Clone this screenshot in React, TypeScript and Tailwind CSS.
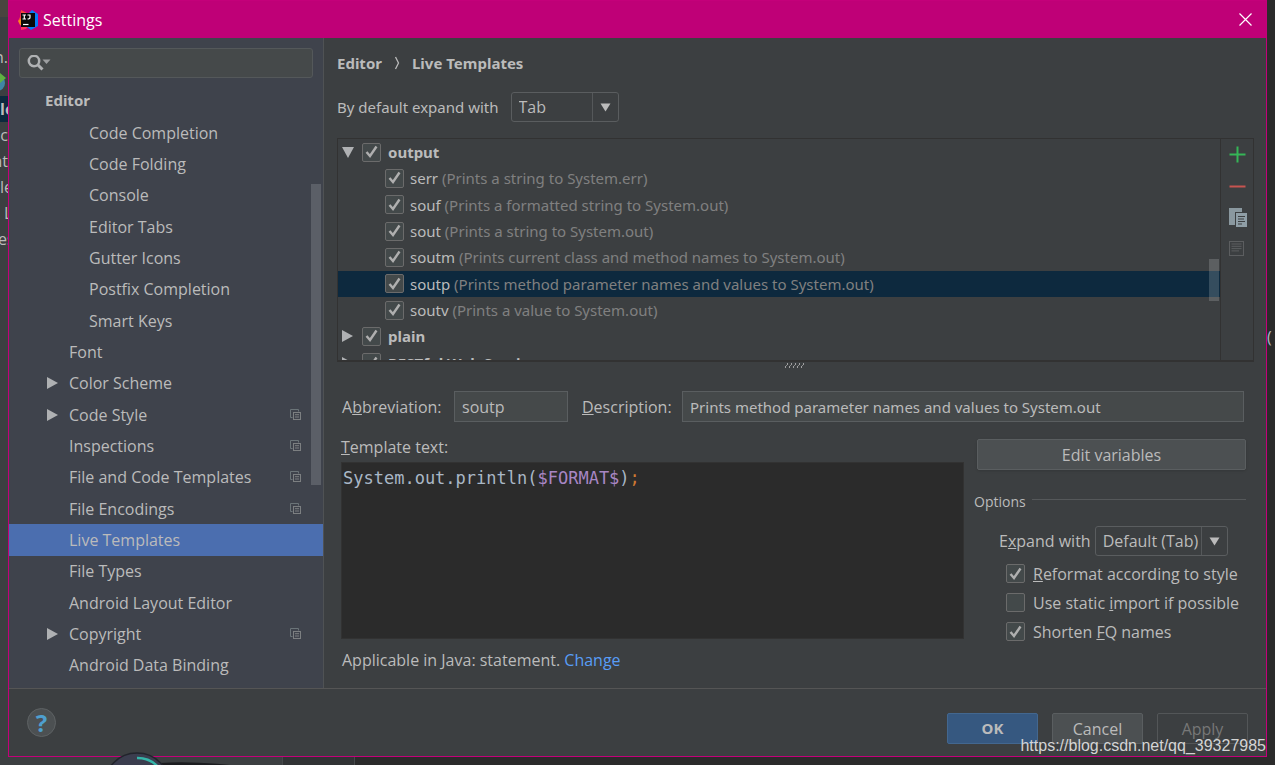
import React from "react";

type SideItem = { label: string; indent?: boolean; arrow?: boolean; copy?: boolean; selected?: boolean };

const SIDE_ITEMS: SideItem[] = [
  { label: "Code Completion", indent: true },
  { label: "Code Folding", indent: true },
  { label: "Console", indent: true },
  { label: "Editor Tabs", indent: true },
  { label: "Gutter Icons", indent: true },
  { label: "Postfix Completion", indent: true },
  { label: "Smart Keys", indent: true },
  { label: "Font" },
  { label: "Color Scheme", arrow: true },
  { label: "Code Style", arrow: true, copy: true },
  { label: "Inspections", copy: true },
  { label: "File and Code Templates", copy: true },
  { label: "File Encodings", copy: true },
  { label: "Live Templates", selected: true },
  { label: "File Types" },
  { label: "Android Layout Editor" },
  { label: "Copyright", arrow: true, copy: true },
  { label: "Android Data Binding" },
];

type TreeItem = { name: string; desc?: string; group?: "open" | "closed"; selected?: boolean };

const TREE: TreeItem[] = [
  { name: "output", group: "open" },
  { name: "serr", desc: "(Prints a string to System.err)" },
  { name: "souf", desc: "(Prints a formatted string to System.out)" },
  { name: "sout", desc: "(Prints a string to System.out)" },
  { name: "soutm", desc: "(Prints current class and method names to System.out)" },
  { name: "soutp", desc: "(Prints method parameter names and values to System.out)", selected: true },
  { name: "soutv", desc: "(Prints a value to System.out)" },
  { name: "plain", group: "closed" },
  { name: "RESTful Web Services", group: "closed" },
];

function ArrowRight() {
  return (
    <svg width="11" height="12" viewBox="0 0 11 12" className="shrink-0" aria-hidden="true">
      <path d="M0 0L11 6L0 12Z" fill="#afb1b3" />
    </svg>
  );
}

function ArrowDown() {
  return (
    <svg width="11" height="9" viewBox="0 0 11 9" className="shrink-0" aria-hidden="true">
      <path d="M.5 .5H10.500L5.500 8.500Z" fill="#bbbbbb" />
    </svg>
  );
}

function ProjectCopyIcon() {
  return (
    <svg width="12" height="12" viewBox="0 0 12 12" fill="none" aria-hidden="true">
      <path d="M2.500 8.500H.5V.5H8.500V2.500" stroke="#6b7478" />
      <rect x="3.500" y="3.500" width="7" height="7" stroke="#7c7f81" />
      <path d="M5 5.700H9M5 8H9" stroke="#7c7f81" />
    </svg>
  );
}

function Check({ id, defaultChecked = false }: { id: string; defaultChecked?: boolean }) {
  return (
    <span className="grid shrink-0 place-items-center">
      <input
        id={id}
        type="checkbox"
        defaultChecked={defaultChecked}
        className="peer col-start-1 row-start-1 size-[19px] appearance-none rounded-xs border border-[#6b6b6b] bg-[#43494a]"
      />
      <svg
        width="13"
        height="14"
        viewBox="0 0 13 14"
        fill="none"
        className="pointer-events-none invisible col-start-1 row-start-1 peer-checked:visible"
        aria-hidden="true"
      >
        <path d="M1.500 7L5 11L11.500 1.500" stroke="#afafaf" strokeWidth="2.400" />
      </svg>
    </span>
  );
}

function Combo({ id, value, className }: { id: string; value: string; className: string }) {
  return (
    <span className={`grid h-[30px] ${className}`}>
      <select
        id={id}
        defaultValue={value}
        className="col-start-1 row-start-1 appearance-none rounded-[3px] border border-[#5a5d5f] bg-[#3c3f41] pl-[7px] text-[#bbbbbb]"
      >
        <option>{value}</option>
      </select>
      <span className="pointer-events-none col-start-1 row-start-1 my-px flex w-[27px] items-center justify-center justify-self-end border-l border-[#55585a]">
        <ArrowDown />
      </span>
    </span>
  );
}

function Sidebar() {
  return (
    <aside className="flex w-[315px] shrink-0 flex-col border-r border-[#4f5254] bg-[#3f434c] pt-2.5">
      <label className="mx-2.5 flex h-[30px] shrink-0 items-center rounded-[3px] border border-[#54585a] bg-[#45494a] pl-[7px]">
        <svg width="24" height="17" viewBox="0 0 24 17" fill="none" aria-hidden="true">
          <circle cx="7" cy="6" r="5.200" stroke="#afb1b3" strokeWidth="2.500" />
          <path d="M10.500 9.500L15.500 14.500" stroke="#afb1b3" strokeWidth="3" />
          <path d="M15.500 4.500H23.500L19.500 9Z" fill="#9c9ea0" />
        </svg>
        <input type="text" aria-label="Search settings" className="min-w-0 flex-1 bg-transparent px-1 outline-none" />
      </label>
      <h2 className="mt-[9px] mb-[3px] pl-9 font-['Noto_Sans',sans-serif] text-[15px] font-bold leading-[27px]">
        Editor
      </h2>
      <ul className="flex min-h-0 flex-1 flex-col pb-[7px]">
        {SIDE_ITEMS.map((item) => (
          <li key={item.label} className={`flex min-h-0 flex-1 ${item.selected ? "bg-[#4b6eaf]" : ""}`}>
            <button type="button" className="flex flex-1 items-center text-left">
              <span className={`flex shrink-0 items-center ${item.indent ? "w-20" : "w-[60px]"} pl-[38px]`}>
                {item.arrow && <ArrowRight />}
              </span>
              <span className="flex-1">{item.label}</span>
              {item.copy && (
                <span className="pr-[21px]">
                  <ProjectCopyIcon />
                </span>
              )}
            </button>
          </li>
        ))}
      </ul>
    </aside>
  );
}

function TemplateTree() {
  return (
    <div className="relative h-[221px] min-w-0 flex-1 overflow-hidden font-['Noto_Sans',sans-serif] text-[15px]">
      <ul className="grid h-[237px] auto-rows-fr">
        {TREE.map((t) => (
          <li key={t.name} className={`flex items-center ${t.selected ? "bg-[#0d293e]" : ""}`}>
            <span className={`flex shrink-0 items-center pl-1 ${t.group ? "w-6" : "w-[47px]"}`}>
              {t.group === "open" && (
                <svg width="12" height="11" viewBox="0 0 12 11" aria-hidden="true">
                  <path d="M0 0H12L6 11Z" fill="#afb1b3" />
                </svg>
              )}
              {t.group === "closed" && <ArrowRight />}
            </span>
            <Check id={`tpl-${t.name}`} defaultChecked />
            <label htmlFor={`tpl-${t.name}`} className={t.group ? "pl-[7px] font-bold" : "pl-1.5"}>
              {t.name}
              {t.desc && <span className="text-[#808080]"> {t.desc}</span>}
            </label>
          </li>
        ))}
      </ul>
      <div className="absolute top-[120px] right-px h-[42px] w-2.5 bg-white/17" />
    </div>
  );
}

function TreeToolbar() {
  return (
    <div className="flex w-[33px] flex-col border-l border-[#323232]">
      <button type="button" aria-label="Add" className="grid h-[31px] place-items-center">
        <svg width="17" height="17" viewBox="0 0 17 17" aria-hidden="true">
          <path d="M8.500 .5V16.500M.5 8.500H16.500" stroke="#35b657" strokeWidth="2" />
        </svg>
      </button>
      <button type="button" aria-label="Remove" className="grid h-8 place-items-center">
        <svg width="17" height="17" viewBox="0 0 17 17" aria-hidden="true">
          <path d="M.5 8.500H16.500" stroke="#c75450" strokeWidth="2" />
        </svg>
      </button>
      <button type="button" aria-label="Duplicate" className="grid h-[31px] place-items-center">
        <svg width="17" height="19" viewBox="0 0 17 19" className="overflow-visible" aria-hidden="true">
          <path d="M0 0H13V4H6V17H0Z" fill="#8a989f" />
          <path d="M7 5H18V19H7Z" fill="#8f9ea6" />
          <path d="M9 8.500H16M9 11H15M9 13.500H16M9 16H13" stroke="#3c3f41" />
        </svg>
      </button>
      <button type="button" aria-label="Restore defaults" disabled className="grid h-[31px] place-items-center">
        <svg width="17" height="15" viewBox="0 0 17 15" fill="none" aria-hidden="true">
          <rect x=".5" y=".5" width="14" height="14" stroke="#5c5e60" />
          <path d="M2.500 3H12.500M2.500 5.300H12.500M2.500 7.600H12.500M2.500 9.900H10" stroke="#5c5e60" />
        </svg>
      </button>
    </div>
  );
}

function OptionsPanel() {
  return (
    <div className="flex w-[272px] shrink-0 flex-col">
      <button
        type="button"
        className="mt-[5px] ml-[3px] h-[31px] rounded-xs border border-[#5a5e60] bg-[#4c5052] shadow-sm"
      >
        Edit variables
      </button>
      <fieldset className="mt-5 flex flex-col">
        <div className="flex items-center gap-1.5">
          <span className="text-[14px] leading-6">Options</span>
          <span className="mb-1.5 h-px flex-1 bg-[#55585a]" />
        </div>
        <div className="mt-3 flex items-center gap-1 pl-[25px]">
          <label htmlFor="expand">
            E<u>x</u>pand with
          </label>
          <Combo id="expand" value="Default (Tab)" className="w-[133px]" />
        </div>
        <div className="mt-[3px] flex flex-col pl-8">
          <div className="flex h-[29px] items-center gap-2">
            <Check id="reformat" defaultChecked />
            <label htmlFor="reformat">
              <u>R</u>eformat according to style
            </label>
          </div>
          <div className="flex h-[29px] items-center gap-2">
            <Check id="static-import" />
            <label htmlFor="static-import">
              Use static <u>i</u>mport if possible
            </label>
          </div>
          <div className="flex h-[29px] items-center gap-2">
            <Check id="shorten" defaultChecked />
            <label htmlFor="shorten">
              Shorten <u>F</u>Q names
            </label>
          </div>
        </div>
      </fieldset>
    </div>
  );
}

function MainPanel() {
  return (
    <main className="flex min-w-0 flex-1 flex-col pr-3 pl-[13px]">
      <nav className="mt-3 flex h-[26px] items-center font-['Noto_Sans',sans-serif] text-[15px] font-bold">
        <span>Editor</span>
        <svg width="6" height="14" viewBox="0 0 6 14" fill="none" className="mx-3" aria-hidden="true">
          <path d="M1.500 1L4.500 7L1.500 13" stroke="#bbbbbb" strokeWidth="1.300" />
        </svg>
        <span>Live Templates</span>
      </nav>
      <div className="mt-4 flex items-center gap-3">
        <label htmlFor="default-expand" className="font-['Noto_Sans',sans-serif] text-[15px]">
          By default expand with
        </label>
        <Combo id="default-expand" value="Tab" className="w-[108px]" />
      </div>
      <section className="mt-4 flex border border-b-2 border-[#323232]">
        <TemplateTree />
        <TreeToolbar />
      </section>
      <div className="flex h-[29px] justify-center">
        <svg width="22" height="8" viewBox="0 0 22 8" aria-hidden="true">
          <path
            d="M2 2h1M6 2h1M10 2h1M14 2h1M18 2h1M0 5h1M4 5h1M8 5h1M12 5h1M16 5h1"
            stroke="#c0c0c0"
            strokeWidth="1.500"
          />
          <path d="M1 3.500h1M5 3.500h1M9 3.500h1M13 3.500h1M17 3.500h1" stroke="#8a8a8a" />
        </svg>
      </div>
      <div className="flex items-center pr-2.5 pl-[5px]">
        <label htmlFor="abbr" className="w-28">
          A<u>b</u>breviation:
        </label>
        <input
          id="abbr"
          type="text"
          defaultValue="soutp"
          className="h-[31px] w-[114px] border border-[#5a5e60] bg-[#45494a] px-[7px] outline-none"
        />
        <label htmlFor="desc" className="w-[114px] pl-3.5">
          <u>D</u>escription:
        </label>
        <input
          id="desc"
          type="text"
          defaultValue="Prints method parameter names and values to System.out"
          className="h-[31px] min-w-0 flex-1 border border-[#5a5e60] bg-[#45494a] px-[7px] font-['Noto_Sans',sans-serif] text-[15px] outline-none"
        />
      </div>
      <div className="mt-3 flex gap-2.5 pr-2 pl-1">
        <div className="flex min-w-0 flex-1 flex-col">
          <label htmlFor="template" className="pb-px leading-[27px]">
            <u>T</u>emplate text:
          </label>
          <div
            id="template"
            role="textbox"
            aria-label="Template text"
            contentEditable
            suppressContentEditableWarning
            className="h-[177px] border border-[#323232] bg-[#2b2b2b] px-px pt-[3px] font-['DejaVu_Sans_Mono',monospace] text-[17px] leading-6 text-[#a9b7c6] outline-none"
          >
            System.out.println(<span className="text-[#a886c4]">$FORMAT$</span>)<span className="text-[#cc7832]">;</span>
          </div>
        </div>
        <OptionsPanel />
      </div>
      <p className="mt-px pl-[5px] leading-[26px]">
        Applicable in Java: statement.{" "}
        <a href="#change" className="text-[#589df6]">
          Change
        </a>
      </p>
    </main>
  );
}

function Logo() {
  return (
    <svg width="20" height="20" viewBox="0 0 20 20" aria-hidden="true">
      <path d="M3 0L9 3L7 10L0 11L2 7Z" fill="#f9443f" />
      <path d="M0 11L4 8V16L2 15Z" fill="#fc8a1c" />
      <path d="M3 15H11L8 19L3 20Z" fill="#fe315d" />
      <path d="M11 3L14 0L20 4V16L13 20L9 17Z" fill="#087cfa" />
      <rect x="3" y="3" width="14" height="14" fill="#090909" />
      <path
        d="M4.500 5H8M6.300 5V9M4.500 9H8M9.500 5H12.500M12 5V7.500Q12 9 9.500 9"
        stroke="#fff"
        strokeWidth="1.200"
        fill="none"
      />
      <path d="M5 14.500H10.500" stroke="#fff" strokeWidth="1.200" />
    </svg>
  );
}

function Dialog() {
  return (
    <div className="flex min-w-0 flex-1 flex-col border border-[#c4007a] bg-[#3c3f41]">
      <header className="flex h-[37px] shrink-0 items-center bg-[#bf0077] pr-3.5 pl-[9px] text-white">
        <Logo />
        <h1 className="flex-1 pl-[5px]">Settings</h1>
        <button type="button" aria-label="Close">
          <svg width="13" height="13" viewBox="0 0 13 13" aria-hidden="true">
            <path d="M.5 .5L12.500 12.500M12.500 .5L.5 12.500" stroke="#fff" strokeWidth="1.200" />
          </svg>
        </button>
      </header>
      <div className="flex min-h-0 flex-1">
        <div className="relative flex">
          <Sidebar />
          <div className="absolute top-[146px] right-[3px] h-[301px] w-2.5 bg-[#5b5f67]" />
        </div>
        <MainPanel />
      </div>
      <footer className="flex h-[68px] shrink-0 items-center border-t border-[#555555] pr-[18px] pl-[18px]">
        <button
          type="button"
          aria-label="Help"
          className="flex size-[29px] items-center justify-center rounded-full border border-[#5e6264] bg-[#4c5052] text-[24px] font-bold text-[#4e9fcf]"
        >
          ?
        </button>
        <div className="mt-3 ml-auto flex gap-3.5">
          <button
            type="button"
            className="h-[31px] w-[91px] rounded-xs border border-[#43678f] bg-[#365880] font-['Noto_Sans',sans-serif] text-[15px] font-bold"
          >
            OK
          </button>
          <button type="button" className="h-[31px] w-[91px] rounded-xs border border-[#5a5e60] bg-[#4c5052]">
            Cancel
          </button>
          <button type="button" disabled className="h-[31px] w-[91px] rounded-xs border border-[#535658] text-[#777777]">
            Apply
          </button>
        </div>
      </footer>
    </div>
  );
}

function LeftStrip() {
  return (
    <div className="flex w-2 shrink-0 flex-col items-end overflow-hidden bg-[#3c3f41] leading-[26px]">
      <div className="h-[17px] w-full shrink-0 bg-[#49453f]" />
      <span className="mt-[27px]">n.</span>
      <svg width="8" height="26" viewBox="0 0 8 26" className="shrink-0" aria-hidden="true">
        <circle cx="-3" cy="13" r="8" fill="#3f86a5" />
        <path d="M0 3L6 8L0 13Z" fill="#5fb142" />
      </svg>
      <span className="flex w-full bg-[#0d293e] font-bold">le</span>
      <span>c</span>
      <span>nt</span>
      <span className="w-2">le</span>
      <span className="w-1">L</span>
      <span className="w-2.5">es</span>
    </div>
  );
}

export default function App() {
  return (
    <div className="relative flex h-screen min-h-[765px] flex-col overflow-hidden bg-[#2b2b2b] font-['Open_Sans','Noto_Sans',sans-serif] text-[16px] text-[#bbbbbb]">
      <div className="flex min-h-0 flex-1">
        <LeftStrip />
        <Dialog />
        <div className="w-2 shrink-0 overflow-hidden bg-[#2b2b2b] pt-[324px] leading-[26px] text-[#a9b7c6]">(</div>
      </div>
      <div className="flex h-2 shrink-0">
        <div className="w-[282px] bg-[#3c3f41]" />
        <div className="w-[73px] border-x border-[#46494b] bg-[#313335]" />
      </div>
      <svg width="150" height="14" viewBox="0 0 150 14" className="absolute bottom-0 left-[100px]" aria-hidden="true">
        <path d="M60 12Q90 10 130 14H60Z" fill="#1c1d20" />
        <circle cx="37" cy="35" r="33" fill="#3b3d4e" stroke="#22242c" strokeWidth="1.500" />
        <path d="M37 7A28 28 0 0 1 59 17" fill="none" stroke="#35b5a9" strokeWidth="2.500" />
      </svg>
      <span className="absolute right-[9px] bottom-[7px] font-['Liberation_Sans',sans-serif] text-[16px] leading-6 text-[#d4d4d4]">
        https://blog.csdn.net/qq_39327985
      </span>
    </div>
  );
}
